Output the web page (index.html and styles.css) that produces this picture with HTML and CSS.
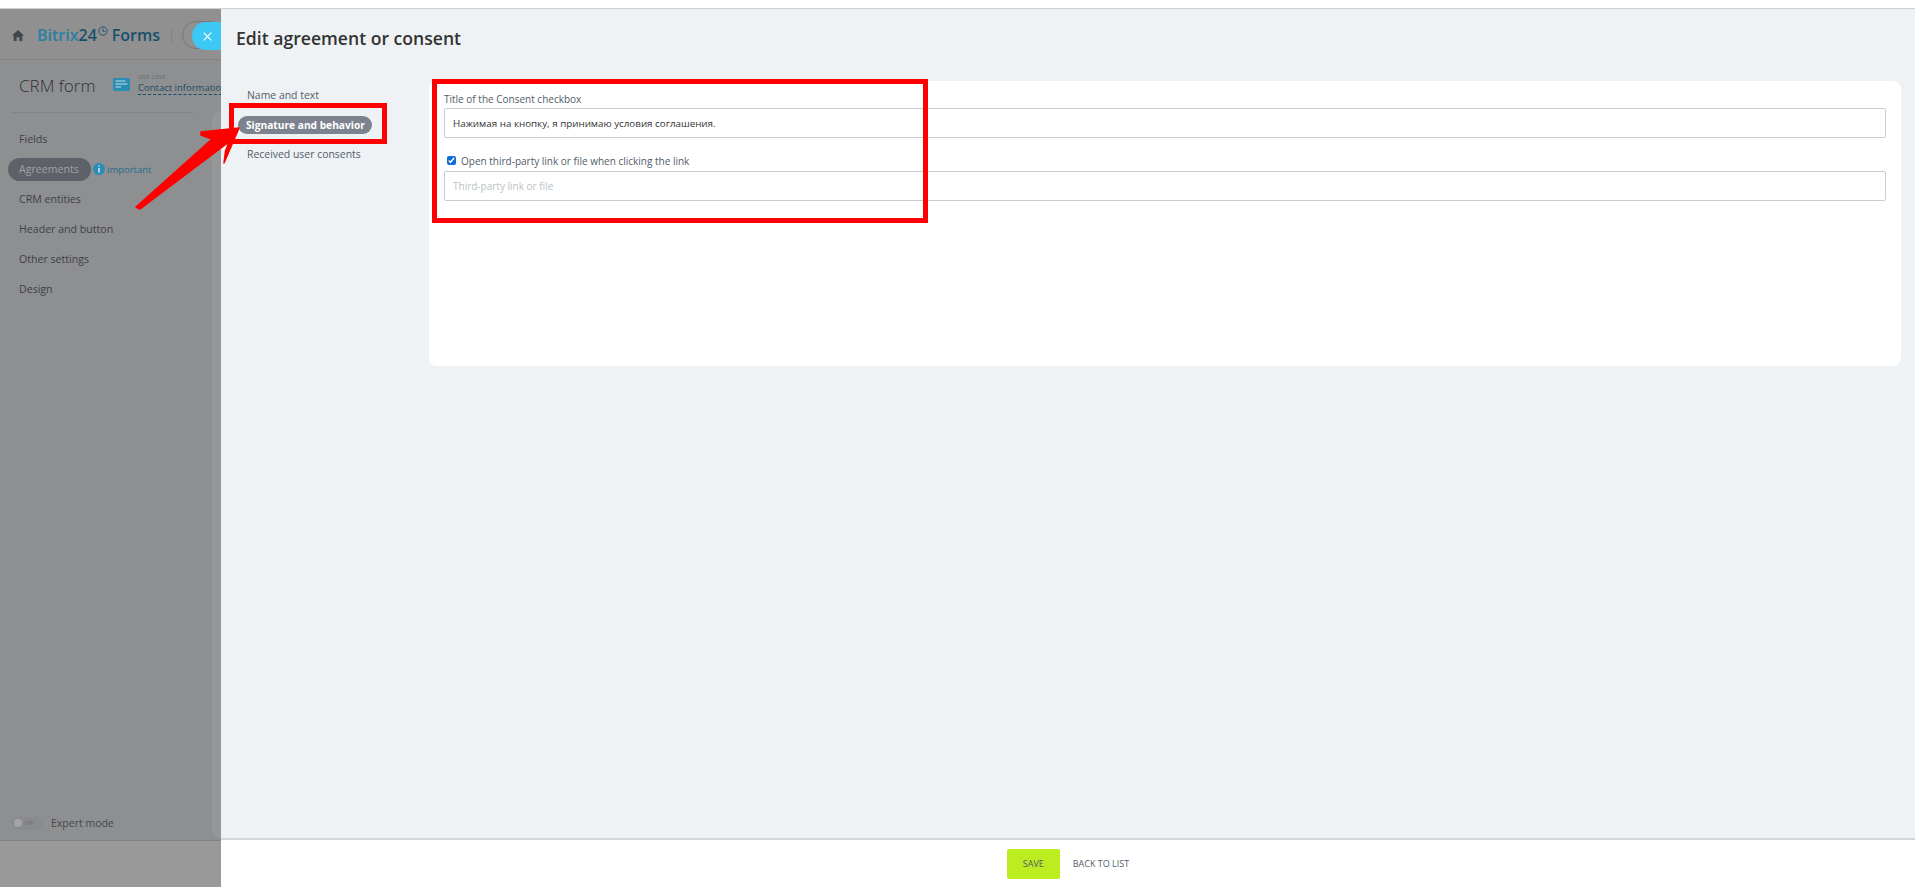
FILE: index.html
```html
<!DOCTYPE html>
<html lang="en">
<head>
<meta charset="utf-8">
<title>Edit agreement or consent</title>
<link rel="stylesheet" href="styles.css">
</head>
<body>
<div class="topstrip"></div>
<div class="stage">
  <aside class="aside">
    <header class="aside-head">
      <svg class="home" viewBox="0 0 12 11" width="12" height="11"><path d="M6 0 12 5.6H10.3V11H7.4V7.2H4.6V11H1.7V5.6H0Z" fill="#41464d"/></svg>
      <span class="logo"><span class="logo-b">Bitrix</span><span class="logo-n">24</span><svg class="clock" viewBox="0 0 10 10" width="10" height="10"><circle cx="5" cy="5" r="4.2" fill="none" stroke="#17506f" stroke-width=".9"/><path d="M5 2.4V5.4H7.4" fill="none" stroke="#17506f" stroke-width=".9"/></svg><span class="logo-n logo-f">Forms</span></span>
      <span class="head-div"></span>
      <span class="tog-outline"></span>
      <span class="close-tab"><svg viewBox="0 0 9 9" width="9" height="9"><path d="M.7.7 8.3 8.3M8.3.7.7 8.3" stroke="#fff" stroke-width="1.2"/></svg></span>
    </header>
    <div class="aside-body">
      <div class="aside-main">
        <div class="crm-row">
          <span class="crm-title">CRM form</span>
          <svg class="crm-icon" viewBox="0 0 17 13" width="17" height="13"><rect width="17" height="13" rx="1.5" fill="#2a8db5"/><path d="M2.5 3H12.5M2.5 6H14.5M2.5 9H8" stroke="#8fc3d8" stroke-width="1.6"/></svg>
          <span class="crm-case"><span class="case-label">use case</span><span class="case-link">Contact information</span></span>
        </div>
        <nav class="aside-nav">
          <a class="nav-item">Fields</a>
          <div class="nav-row"><a class="nav-item nav-active">Agreements</a><svg class="info" viewBox="0 0 12 12" width="12" height="12"><circle cx="6" cy="6" r="6" fill="#2a8db5"/><path d="M6 2.4V3.8M6 5V9.6" stroke="#d5e3ea" stroke-width="1.6"/></svg><span class="important">important</span></div>
          <a class="nav-item">CRM entities</a>
          <a class="nav-item">Header and button</a>
          <a class="nav-item">Other settings</a>
          <a class="nav-item">Design</a>
        </nav>
        <div class="expert"><span class="expert-tog"><span class="expert-knob"></span><span class="expert-off">OFF</span></span><span>Expert mode</span></div>
      </div>
      <div class="aside-band"></div>
    </div>
    <div class="aside-foot"></div>
  </aside>
  <main class="panel">
    <h1 class="panel-title">Edit agreement or consent</h1>
    <div class="panel-body">
      <ul class="side-menu">
        <li class="side-item">Name and text</li>
        <li class="side-item side-active">Signature and behavior</li>
        <li class="side-item">Received user consents</li>
      </ul>
      <section class="card">
        <label class="field-label">Title of the Consent checkbox</label>
        <input class="field" type="text" value="Нажимая на кнопку, я принимаю условия соглашения.">
        <label class="check-row"><input class="check" type="checkbox" checked><span>Open third-party link or file when clicking the link</span></label>
        <input class="field" type="text" placeholder="Third-party link or file">
      </section>
    </div>
    <footer class="panel-foot">
      <button class="btn-save">SAVE</button>
      <a class="btn-back">BACK TO LIST</a>
    </footer>
  </main>
  <svg class="marks" viewBox="0 0 1915 878" width="1915" height="878">
    <g fill="none" stroke="#ff0000" stroke-width="5">
      <rect x="231.500" y="96.500" width="153" height="36"/>
      <rect x="434.500" y="72.500" width="491" height="139"/>
    </g>
    <path d="M136 198 212 130 201 126 201 123 239 119 224 154 225.500 142 229 133 140 200Z" fill="#ff0000" stroke="#ff0000" stroke-linejoin="round" stroke-width="1.500"/>
  </svg>
</div>
</body>
</html>
```
FILE: styles.css
```css
* { box-sizing: border-box; }
html, body { margin: 0; height: 100%; }
body {
  font-family: "Open Sans", "Noto Sans", sans-serif;
  font-size: 11px;
  background: #fff;
  overflow: hidden;
  display: flex;
  flex-direction: column;
}
.topstrip { height: 9px; flex: none; background: #fff; border-bottom: 1px solid #cfcfcf; }
.stage { position: relative; flex: 1; display: flex; min-height: 0; }

.aside { width: 221px; flex: none; display: flex; flex-direction: column; overflow: hidden; background: #8e8f91; color: #3d4148; }
.aside-head { height: 51px; flex: none; display: flex; align-items: center; border-bottom: 1px solid #838486; padding-left: 12px; padding-top: 2px; background: #909091; position: relative; }
.home { flex: none; }
.logo { display: flex; align-items: center; margin-left: 13px; font-size: 16px; font-weight: 600; white-space: nowrap; }
.logo-b { color: #2a7fa3; }
.logo-n { color: #17506f; }
.logo-f { margin-left: 4px; }
.clock { margin: -8px 0 0 1px; }
.head-div { width: 1px; height: 15px; margin-left: 11px; background: #838486; flex: none; }
.tog-outline { width: 42px; height: 28px; margin-left: 10px; flex: none; border: 1px solid #77787a; border-radius: 14px; }
.close-tab { position: absolute; left: 192px; top: 13px; width: 40px; height: 28px; border-radius: 14px; background: #3bc8f5; display: flex; align-items: center; padding-left: 11px; }

.aside-body { flex: 1; display: flex; min-height: 0; }
.aside-main { width: 212px; flex: none; display: flex; flex-direction: column; }
.aside-band { flex: 1; margin: 52px 0 2px; background: #959697; border-radius: 8px 0 0 8px; }
.crm-row { margin: 0 18px 0 11px; height: 53px; display: flex; align-items: center; border-bottom: 1px solid #838486; padding: 0 0 1px 8px; white-space: nowrap; }
.crm-title { font-size: 17px; font-weight: 300; color: #2e3238; width: 94px; flex: none; }
.crm-icon { flex: none; margin-top: -3px; }
.crm-case { display: flex; flex-direction: column; margin-left: 8px; margin-top: -5px; line-height: 11px; }
.case-label { font-size: 7px; color: #6d6f72; }
.case-link { font-size: 9.500px; color: #1d4a66; border-bottom: 1px dashed #1d4a66; line-height: 12px; }

.aside-nav { display: flex; flex-direction: column; margin-top: 11px; }
.nav-item { display: block; height: 30px; line-height: 30px; padding-left: 19px; font-size: 10.600px; color: #3d4148; }
.nav-row { display: flex; align-items: center; height: 30px; padding-left: 8px; }
.nav-active { height: 23px; line-height: 23px; width: 83px; padding-left: 11px; border-radius: 12px; background: #5e6168; color: #9ea1a6; }
.info { margin-left: 2px; flex: none; }
.important { margin-left: 2px; font-size: 9.500px; color: #1d6d92; }

.expert { margin-top: auto; margin-bottom: 10px; padding-left: 11px; display: flex; align-items: center; gap: 8px; font-size: 10.500px; color: #45484e; }
.expert-tog { width: 32px; height: 13px; border-radius: 7px; background: #8a8b8d; display: flex; align-items: center; padding-left: 3px; gap: 2px; }
.expert-knob { width: 8px; height: 8px; border-radius: 50%; background: #a3a4a6; }
.expert-off { font-size: 5px; color: #6d6f72; }
.aside-foot { height: 47px; flex: none; background: #999; border-top: 1px solid #818284; }

.panel { flex: 1; min-width: 0; display: flex; flex-direction: column; background: #eef2f4; }
.panel-title { margin: 0; padding: 17px 0 0 15px; height: 72px; flex: none; font-size: 17.600px; font-weight: 600; line-height: 24px; color: #333; }
.panel-body { flex: 1; display: flex; min-height: 0; }
.side-menu { list-style: none; margin: -1px 0 0; padding: 0 0 0 17px; width: 208px; flex: none; }
.side-item { height: 30px; line-height: 18px; padding: 6px 0 0 9px; font-size: 10.450px; color: #525c69; white-space: nowrap; }
.side-active { width: 134px; height: 18px; padding: 0 0 0 8px; margin: 6px 0 5px; border-radius: 9px; background: #7d828f; color: #fff; font-weight: 700; font-size: 10.200px; }
.card { width: 1472px; height: 285px; background: #fff; border-radius: 8px; padding: 10px 15px 0; display: flex; flex-direction: column; }
.field-label { font-size: 10px; line-height: 17px; color: #525c69; }
.field { width: 100%; height: 30px; flex: none; border: 1px solid #c6cdd3; border-radius: 2px; padding: 0 8px; font: 9.800px "Open Sans", "Noto Sans", sans-serif; color: #333; background: #fff; outline: none; }
.field::placeholder { color: #b9bfc5; opacity: 1; font-size: 10px; }
.check-row { display: flex; align-items: center; margin-top: 14px; height: 17px; margin-bottom: 2px; padding-left: 3px; gap: 5px; font-size: 10px; color: #525c69; }
.check { width: 9px; height: 9px; margin: 0; accent-color: #0a6cd6; }

.panel-foot { height: 49px; flex: none; background: #fff; border-top: 2px solid #d3d7da; display: flex; align-items: center; justify-content: center; gap: 13px; }
.btn-save { width: 53px; height: 30px; padding: 0; border: 0; border-radius: 2px; background: #bbed21; font: 400 9px "Open Sans", "Noto Sans", sans-serif; color: #535c69; }
.btn-back { font-size: 9px; font-weight: 400; color: #535c69; }

.marks { position: absolute; left: 0; top: 0; pointer-events: none; }
```
